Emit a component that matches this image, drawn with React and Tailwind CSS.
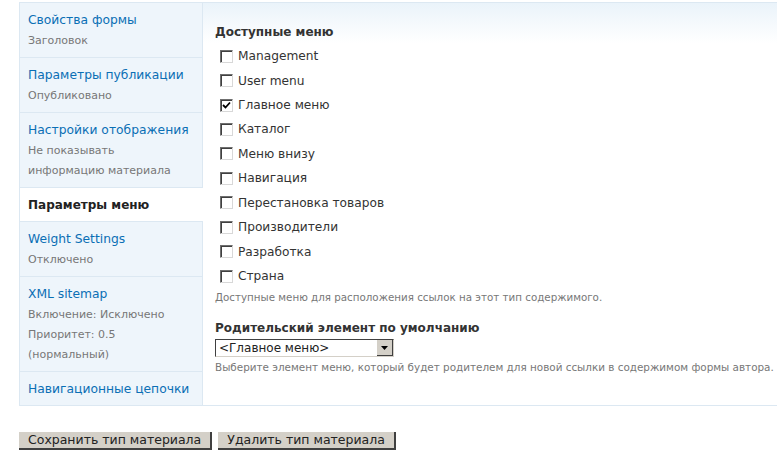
const tabs = [
  { title: 'Свойства формы', summary: ['Заголовок'] },
  { title: 'Параметры публикации', summary: ['Опубликовано'] },
  { title: 'Настройки отображения', summary: ['Не показывать', 'информацию материала'] },
  { title: 'Параметры меню', summary: [], active: true },
  { title: 'Weight Settings', summary: ['Отключено'] },
  { title: 'XML sitemap', summary: ['Включение: Исключено', 'Приоритет: 0.5', '(нормальный)'] },
  { title: 'Навигационные цепочки', summary: [] },
]

const menus = [
  ['Management', false],
  ['User menu', false],
  ['Главное меню', true],
  ['Каталог', false],
  ['Меню внизу', false],
  ['Навигация', false],
  ['Перестановка товаров', false],
  ['Производители', false],
  ['Разработка', false],
  ['Страна', false],
]

function Checkbox({ checked }) {
  return (
    <span className="w-[13px] h-[13px] bg-white border-t border-l border-t-[#6f6f6f] border-l-[#6f6f6f] border-b border-r border-b-[#d8d8d8] border-r-[#d8d8d8] shadow-[inset_1px_1px_0_#404040] flex items-center justify-center shrink-0">
      {checked && (
        <svg width="9" height="9" viewBox="0 0 9 9">
          <path d="M1 4 L3.5 6.5 L8 1.5" stroke="#000" strokeWidth="1.8" fill="none" />
        </svg>
      )}
    </span>
  )
}

function Button({ children }) {
  return (
    <button className="h-[18px] bg-[#d4d0c8] border-r-2 border-b-2 border-r-[#404040] border-b-[#404040] px-[9px] text-[12.5px] leading-[16px] text-[#222]">
      {children}
    </button>
  )
}

export default function App() {
  return (
    <div className="w-[777px] h-[456px] overflow-hidden bg-white text-[#333] font-['DejaVu_Sans',Verdana,sans-serif]">
      <div className="ml-[19px] mt-[2px] w-[800px] flex border border-[#dce8f2]">
        {/* Tabs */}
        <ul className="w-[183px] shrink-0 bg-[#eef5fb]">
          {tabs.map((t) => (
            <li
              key={t.title}
              className={
                t.active
                  ? 'bg-white pl-[8px] pt-[7px] pb-[6px] border-b border-[#dce8f2]'
                  : 'pl-[8px] pt-[7px] pb-[6px] border-b border-r border-[#dce8f2] last:border-b-0'
              }
            >
              <div
                className={
                  t.active
                    ? 'text-[12px] leading-[20px] font-bold text-[#222]'
                    : 'text-[12.3px] leading-[20px] text-[#0b6fb5]'
                }
              >
                {t.title}
              </div>
              {t.summary.length > 0 && (
                <div className="mt-[1px]">
                  {t.summary.map((s) => (
                    <div key={s} className="text-[11px] leading-[20px] text-[#777]">
                      {s}
                    </div>
                  ))}
                </div>
              )}
            </li>
          ))}
        </ul>

        {/* Pane */}
        <div className="flex-1 pl-[12px] pt-[20px] bg-[linear-gradient(to_bottom,#eaf3fa,#ffffff_40px)]">
          <div className="text-[12px] leading-[18px] font-bold text-[#333]">Доступные меню</div>
          <div className="mt-[3px] pl-[5px]">
            {menus.map(([label, checked]) => (
              <label key={label} className="h-[24.44px] flex items-center gap-[5px]">
                <Checkbox checked={checked} />
                <span className="text-[12.2px] text-[#333]">{label}</span>
              </label>
            ))}
          </div>
          <div className="mt-[2px] text-[10.3px] leading-[14px] text-[#777]">
            Доступные меню для расположения ссылок на этот тип содержимого.
          </div>

          <div className="mt-[15px] text-[12px] leading-[18px] font-bold text-[#333]">
            Родительский элемент по умолчанию
          </div>
          <div className="mt-[2px] w-[179px] h-[18px] flex border-t border-l border-t-[#404040] border-l-[#404040] border-b border-r border-b-[#d4d0c8] border-r-[#d4d0c8] bg-white">
            <span className="flex-1 pl-[3px] text-[12px] leading-[16px] text-[#222]">&lt;Главное меню&gt;</span>
            <span className="w-[16px] h-[16px] bg-[#d4d0c8] border-r border-b border-[#404040] flex items-center justify-center">
              <svg width="7" height="4" viewBox="0 0 7 4">
                <path d="M0 0 H7 L3.5 4 Z" fill="#000" />
              </svg>
            </span>
          </div>
          <div className="mt-[3px] text-[10.4px] leading-[14px] text-[#777] whitespace-nowrap">
            Выберите элемент меню, который будет родителем для новой ссылки в содержимом формы автора.
          </div>
        </div>
      </div>

      <div className="ml-[19px] mt-[26px] flex gap-[6px]">
        <Button>Сохранить тип материала</Button>
        <Button>Удалить тип материала</Button>
      </div>
    </div>
  )
}
